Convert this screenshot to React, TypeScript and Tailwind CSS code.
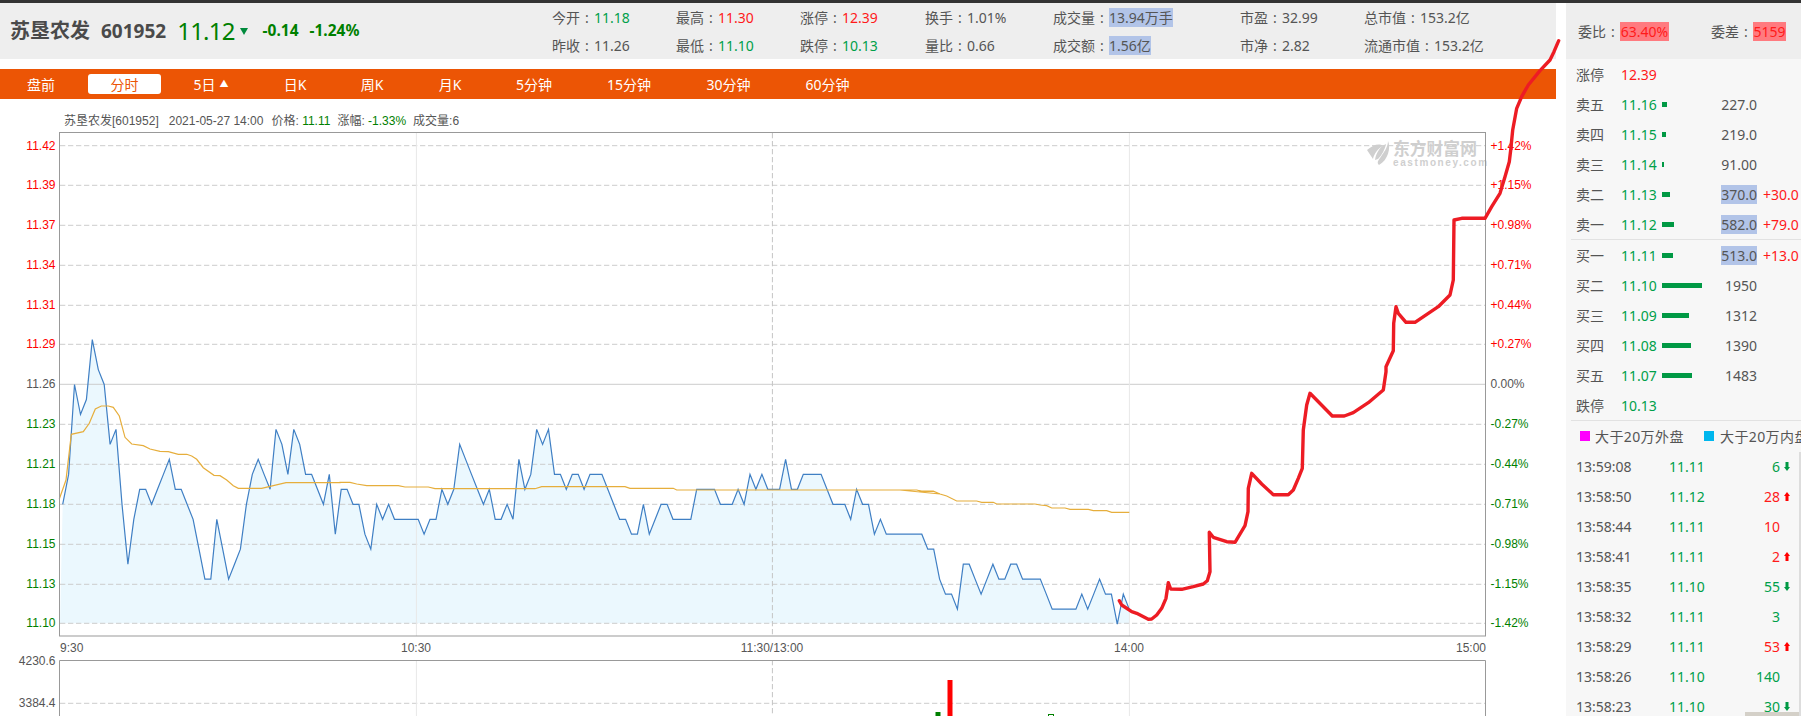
const GREEN = '#00a04a';
const RED = '#ff1a1a';

// price per minute, in cents above 11.00
const cents = [
  18, 20, 26, 24, 25, 29, 27, 26, 22, 23,
  18, 14, 17, 19, 19, 18, 19, 20, 21, 19,
  19, 18, 17, 15, 13, 13, 17, 15, 13, 14,
  15, 18, 20, 21, 20, 19, 23, 22, 20, 23,
  22, 20, 20, 19, 18, 20, 16, 19, 19, 18,
  18, 16, 15, 18, 17, 18, 17, 17, 17, 17,
  17, 16, 17, 17, 19, 18, 19, 22, 21, 20,
  19, 18, 19, 17, 17, 18, 17, 21, 19, 20,
  23, 22, 23, 20, 20, 19, 20, 20, 19, 20,
  20, 20, 19, 18, 17, 17, 16, 16, 18, 16,
  17, 18, 18, 17, 17, 17, 17, 19, 19, 19,
  19, 18, 18, 18, 19, 18, 20, 19, 20, 19,
  19, 19, 21, 19, 19, 20, 20, 20, 20, 19,
  18, 18, 18, 17, 19, 18, 18, 16, 17, 16,
  16, 16, 16, 16, 16, 16, 15, 15, 13, 12,
  12, 11, 14, 14, 13, 12, 13, 14, 13, 13,
  14, 14, 13, 13, 13, 13, 12, 11, 11, 11,
  11, 11, 12, 11, 12, 13, 12, 12, 10, 12, 11,
];
const pricePts = cents
  .map((c, i) => `${(62.7 + 5.925 * i).toFixed(1)},${(504.3 - (c - 18) * 14.97).toFixed(1)}`)
  .join(' ');
const areaPts = `60,623.3 ${pricePts} 1129.2,623.3`;

// traced in 3x crop coordinates, so convert back to page pixels
const traced = (bx: number, by: number, p: number[][]) =>
  p.map(([x, y]) => `${(bx + x / 3).toFixed(1)},${(by + y / 3).toFixed(1)}`).join(' ');

const avgPts = [
  traced(40, 320, [[58, 537], [78, 480], [94, 343], [130, 335], [148, 310], [166, 267], [184, 258], [205, 258], [220, 262], [238, 288], [255, 352], [275, 372], [310, 377], [330, 387], [360, 394], [385, 395], [415, 403], [440, 403], [455, 408], [470, 418], [490, 443], [522, 466], [540, 467], [560, 480], [580, 497], [595, 505], [665, 505], [700, 497], [738, 488], [900, 488]]),
  traced(340, 400, [[0, 247], [30, 247], [50, 252], [80, 257], [175, 257], [195, 261], [265, 261], [285, 266], [585, 266], [605, 260], [855, 260], [870, 265], [900, 265]]),
  traced(640, 430, [[0, 175], [100, 175], [110, 180], [830, 180], [845, 184], [880, 184], [900, 192]]),
  traced(900, 480, [[0, 30], [50, 30], [65, 33], [100, 33], [120, 42], [140, 48], [170, 63], [230, 63], [245, 67], [280, 67], [290, 72], [405, 72], [420, 75], [440, 77], [455, 84], [495, 84], [510, 88], [565, 88], [580, 92], [620, 92], [635, 97], [688, 97]]),
].join(' ');

const redPts = [
  traced(1100, 360, [[58, 722], [65, 735], [95, 755], [110, 760], [145, 778], [155, 777], [170, 765], [185, 745], [198, 715], [205, 668], [212, 687], [245, 688], [280, 680], [310, 672], [322, 662], [330, 635], [328, 517], [340, 532], [380, 545], [405, 547], [435, 497], [444, 455], [445, 385], [455, 340], [485, 372], [520, 404], [565, 404], [580, 390], [595, 355], [607, 325], [610, 210], [620, 135], [630, 100], [697, 168], [733, 168], [760, 158], [805, 128], [850, 90], [858, 35]]),
  traced(1100, 30, [[858, 1010], [880, 962], [881, 880], [888, 830], [895, 850], [918, 877], [945, 877], [1015, 830], [1050, 795], [1060, 750], [1062, 570], [1085, 565], [1155, 565], [1175, 530], [1200, 490], [1215, 440], [1228, 395], [1232, 360], [1238, 300], [1250, 235], [1265, 200], [1285, 165], [1320, 122], [1350, 90], [1362, 65], [1376, 32]]),
].join(' ');

const gridRows = [
  { y: 145.7, l: '11.42', r: '+1.42%', c: '#ff0000' },
  { y: 185.3, l: '11.39', r: '+1.15%', c: '#ff0000' },
  { y: 225.3, l: '11.37', r: '+0.98%', c: '#ff0000' },
  { y: 265.3, l: '11.34', r: '+0.71%', c: '#ff0000' },
  { y: 305.3, l: '11.31', r: '+0.44%', c: '#ff0000' },
  { y: 344.3, l: '11.29', r: '+0.27%', c: '#ff0000' },
  { y: 384.3, l: '11.26', r: '0.00%', c: '#555555' },
  { y: 424.3, l: '11.23', r: '-0.27%', c: '#008000' },
  { y: 464.3, l: '11.21', r: '-0.44%', c: '#008000' },
  { y: 504.3, l: '11.18', r: '-0.71%', c: '#008000' },
  { y: 544.3, l: '11.15', r: '-0.98%', c: '#008000' },
  { y: 584.3, l: '11.13', r: '-1.15%', c: '#008000' },
  { y: 623.3, l: '11.10', r: '-1.42%', c: '#008000' },
];

const statCols = [
  { w: 'w-[124px]', a: ['今开', '11.18', GREEN], b: ['昨收', '11.26', '#555'] },
  { w: 'w-[124px]', a: ['最高', '11.30', RED], b: ['最低', '11.10', GREEN] },
  { w: 'w-[125px]', a: ['涨停', '12.39', RED], b: ['跌停', '10.13', GREEN] },
  { w: 'w-[128px]', a: ['换手', '1.01%', '#555'], b: ['量比', '0.66', '#555'] },
  { w: 'w-[187px]', a: ['成交量', '13.94万手', '#555', 1], b: ['成交额', '1.56亿', '#555', 1] },
  { w: 'w-[124px]', a: ['市盈', '32.99', '#555'], b: ['市净', '2.82', '#555'] },
  { w: 'w-[190px]', a: ['总市值', '153.2亿', '#555'], b: ['流通市值', '153.2亿', '#555'] },
];

const tabs = [
  { t: '盘前', w: 'w-[82px]' },
  { t: '分时', w: 'w-[73px] ml-[6px]', on: true },
  { t: '5日', w: 'w-[100px]', up: true },
  { t: '日K', w: 'w-[68px]' },
  { t: '周K', w: 'w-[86px]' },
  { t: '月K', w: 'w-[70px]' },
  { t: '5分钟', w: 'w-[98px]' },
  { t: '15分钟', w: 'w-[92px]' },
  { t: '30分钟', w: 'w-[107px]' },
  { t: '60分钟', w: 'w-[91px]' },
];

const sells = [
  { n: '卖五', p: '11.16', bar: 'w-[5px]', v: '227.0' },
  { n: '卖四', p: '11.15', bar: 'w-[4px]', v: '219.0' },
  { n: '卖三', p: '11.14', bar: 'w-[2px]', v: '91.00' },
  { n: '卖二', p: '11.13', bar: 'w-[8px]', v: '370.0', d: '+30.0' },
  { n: '卖一', p: '11.12', bar: 'w-[12px]', v: '582.0', d: '+79.0' },
];
const buys = [
  { n: '买一', p: '11.11', bar: 'w-[11px]', v: '513.0', d: '+13.0' },
  { n: '买二', p: '11.10', bar: 'w-[40px]', v: '1950' },
  { n: '买三', p: '11.09', bar: 'w-[27px]', v: '1312' },
  { n: '买四', p: '11.08', bar: 'w-[29px]', v: '1390' },
  { n: '买五', p: '11.07', bar: 'w-[30px]', v: '1483' },
];

const trades = [
  { t: '13:59:08', p: '11.11', v: '6', c: GREEN, a: 'down' },
  { t: '13:58:50', p: '11.12', v: '28', c: RED, a: 'up' },
  { t: '13:58:44', p: '11.11', v: '10', c: RED },
  { t: '13:58:41', p: '11.11', v: '2', c: RED, a: 'up' },
  { t: '13:58:35', p: '11.10', v: '55', c: GREEN, a: 'down' },
  { t: '13:58:32', p: '11.11', v: '3', c: GREEN },
  { t: '13:58:29', p: '11.11', v: '53', c: RED, a: 'up' },
  { t: '13:58:26', p: '11.10', v: '140', c: GREEN },
  { t: '13:58:23', p: '11.10', v: '30', c: GREEN, a: 'down' },
];

function Colon() {
  return <span className="inline-block w-[14px] text-center">:</span>;
}

function Stat({ item }: { item: any[] }) {
  const [label, value, color, mark] = item;
  return (
    <div className="flex h-[28px] items-center whitespace-nowrap text-[14px] text-[#555]">
      <span>{label}</span>
      <Colon />
      <span
        className={mark ? 'flex h-[19px] items-center bg-[#b2c4e8]' : ''}
        style={{ color }}
      >
        {value}
      </span>
    </div>
  );
}

function Chart() {
  return (
    <svg
      width="1556"
      height="584"
      viewBox="0 132 1556 584"
      className="block text-[12px] [font-family:'Liberation_Sans','Noto_Sans_CJK_SC',sans-serif]"
    >
      <polygon points={areaPts} fill="#ebf8fe" />

      {gridRows.map((g) =>
        g.y === 384.3 ? (
          <line key={g.y} x1="60" x2="1485" y1={g.y} y2={g.y} stroke="#cccccc" strokeWidth="1" />
        ) : (
          <line key={g.y} x1="60" x2="1485" y1={g.y} y2={g.y} stroke="#cccccc" strokeWidth="1" strokeDasharray="5.3 2.7" />
        )
      )}
      <line x1="60" x2="1485" y1="703.3" y2="703.3" stroke="#cccccc" strokeDasharray="5.3 2.7" />

      {/* vertical time lines, carried on through the volume panel */}
      <line x1="416.4" x2="416.4" y1="133" y2="636" stroke="#e8e8e8" />
      <line x1="416.4" x2="416.4" y1="660" y2="716" stroke="#e8e8e8" />
      <line x1="772.4" x2="772.4" y1="133" y2="636" stroke="#c4c4c4" strokeDasharray="5.3 2.7" />
      <line x1="772.4" x2="772.4" y1="660" y2="716" stroke="#c4c4c4" strokeDasharray="5.3 2.7" />
      <line x1="1129.4" x2="1129.4" y1="133" y2="636" stroke="#e8e8e8" />
      <line x1="1129.4" x2="1129.4" y1="660" y2="716" stroke="#e8e8e8" />

      {/* eastmoney watermark */}
      <g fill="#cfcfcf">
        <path d="M1367 150 C1373 145 1379 143 1383 146 C1378 148 1374 154 1373 159 C1371 156 1369 153 1367 150 Z" />
        <path d="M1375 160 C1376 152 1381 146 1386 144 C1385 149 1382 155 1378 159 Z" />
        <path d="M1379 165 C1376 162 1379 160 1382 155 C1385 151 1388 146 1388 141 C1391 148 1388 160 1379 165 Z" />
        <text x="1393" y="155" fontSize="16.8" fontWeight="700" className="[font-family:'Noto_Sans_CJK_SC',sans-serif]">
          东方财富网
        </text>
        <text x="1393" y="166" fontSize="10" fontWeight="700" letterSpacing="1.6">
          eastmoney.com
        </text>
      </g>

      <polyline points={pricePts} fill="none" stroke="#3f7fc4" strokeWidth="1.2" />
      <polyline points={avgPts} fill="none" stroke="#e6ae3c" strokeWidth="1.2" />

      <rect x="59.5" y="132.5" width="1426" height="503.5" fill="none" stroke="#999999" />
      <path d="M59.5 716 V660.5 H1485.5 V716" fill="none" stroke="#999999" />

      {gridRows.map((g) => (
        <g key={g.l} fill={g.c}>
          <text x="55.5" y={g.y + 4} textAnchor="end">{g.l}</text>
          <text x="1490.5" y={g.y + 4}>{g.r}</text>
        </g>
      ))}

      <g fill="#555555">
        <text x="60" y="652">9:30</text>
        <text x="416" y="652" textAnchor="middle">10:30</text>
        <text x="772" y="652" textAnchor="middle">11:30/13:00</text>
        <text x="1129" y="652" textAnchor="middle">14:00</text>
        <text x="1486" y="652" textAnchor="end">15:00</text>
        <text x="55.5" y="665" textAnchor="end">4230.6</text>
        <text x="55.5" y="707" textAnchor="end">3384.4</text>
      </g>

      <rect x="947.5" y="680" width="5" height="36" fill="#ff0000" />
      <rect x="935.5" y="712" width="5" height="4" fill="#008000" />
      <rect x="1048.5" y="714.5" width="5" height="2" fill="#ffffff" stroke="#008000" />
    </svg>
  );
}

function QuoteRow({ r }: { r: { n: string; p: string; bar: string; v: string; d?: string } }) {
  return (
    <div className="flex h-[30px] items-center pl-[10px] whitespace-nowrap">
      <span className="w-[45px] shrink-0 text-[#555]">{r.n}</span>
      <span className="w-[41px] shrink-0 text-[#00a04a]">{r.p}</span>
      <div className="flex w-[95px] shrink-0 items-center justify-between">
        <span className={`h-[5px] bg-[#009944] ${r.bar}`} />
        <span className={r.d ? 'flex h-[19px] items-center bg-[#b2c4e8] text-[#555]' : 'text-[#555]'}>{r.v}</span>
      </div>
      {r.d && <span className="ml-[6px] text-[#ff1a1a]">{r.d}</span>}
    </div>
  );
}

function Arrow({ dir, color }: { dir: string; color: string }) {
  return (
    <svg width="6" height="9" viewBox="0 0 6 9" className="ml-[4px] shrink-0">
      <path
        d={dir === 'up' ? 'M3 0 L6 4 H4.5 V9 H1.5 V4 H0 Z' : 'M3 9 L6 5 H4.5 V0 H1.5 V5 H0 Z'}
        fill={color === RED ? '#ff0000' : '#009944'}
      />
    </svg>
  );
}

function SidePanel() {
  return (
    <div className="relative h-[713px] w-[235px] shrink-0 overflow-hidden bg-[#f7f7f7] text-[14px]">
      <div className="flex h-[56px] items-center bg-[#eeeeee] pl-[12px] whitespace-nowrap text-[#555]">
        <span>委比</span>
        <Colon />
        <span className="flex h-[19px] w-[49px] items-center justify-center bg-[#ff7a7f] text-[#ff1a1a]">63.40%</span>
        <span className="ml-[42px]">委差</span>
        <Colon />
        <span className="flex h-[19px] w-[33px] items-center justify-center bg-[#ff7a7f] text-[#ff1a1a]">5159</span>
      </div>

      <div className="flex h-[30px] items-center pl-[10px]">
        <span className="w-[45px] text-[#555]">涨停</span>
        <span className="text-[#ff1a1a]">12.39</span>
      </div>
      {sells.map((r) => <QuoteRow key={r.n} r={r} />)}
      <div className="ml-[5px] h-px bg-[#e2e2e2]" />
      {buys.map((r) => <QuoteRow key={r.n} r={r} />)}
      <div className="flex h-[30px] items-center pl-[10px]">
        <span className="w-[45px] text-[#555]">跌停</span>
        <span className="text-[#00a04a]">10.13</span>
      </div>
      <div className="ml-[5px] h-px bg-[#e2e2e2]" />

      <div className="flex h-[30px] items-center pl-[14px] whitespace-nowrap text-[#555]">
        <span className="h-[10px] w-[10px] shrink-0 bg-[#ff00ff]" />
        <span className="ml-[5px] w-[109px] shrink-0 tracking-[0.4px]">大于20万外盘</span>
        <span className="h-[10px] w-[10px] shrink-0 bg-[#00b7ee]" />
        <span className="ml-[6px] shrink-0 tracking-[0.4px]">大于20万内盘</span>
      </div>

      {trades.map((r) => (
        <div key={r.t} className="flex h-[30px] items-center pl-[10px] whitespace-nowrap">
          <span className="w-[93px] text-[#555]">{r.t}</span>
          <span className="w-[60px] text-[#00a04a]">{r.p}</span>
          <span className="w-[51px] text-right" style={{ color: r.c }}>{r.v}</span>
          {r.a && <Arrow dir={r.a} color={r.c} />}
        </div>
      ))}

      {/* bit of another window peeking in at the bottom right */}
      <div className="absolute right-0 bottom-0 h-[4px] w-[56px] bg-[#d4d0c8]" />
      <div className="absolute top-[449px] right-0 bottom-0 w-[2px] bg-[#dddddd]" />
    </div>
  );
}

export default function App() {
  return (
    <div className="relative h-[716px] w-[1801px] overflow-hidden bg-white [font-family:'Noto_Sans','Noto_Sans_CJK_SC',sans-serif]">
      <div className="h-[3px] bg-[#333333]" />
      <div className="flex">
        <div className="w-[1556px] shrink-0">
          <div className="flex h-[56px] bg-[#eeeeee]">
            <div className="flex w-[552px] items-center pl-[10px] whitespace-nowrap">
              <span className="text-[20px] font-bold text-[#4a4a4a]">苏垦农发</span>
              <span className="ml-[11px] text-[19px] font-bold text-[#4a4a4a]">601952</span>
              <span className="ml-[11px] text-[24px] tracking-[-0.8px] text-[#008000]">11.12</span>
              <svg width="8" height="7" viewBox="0 0 8 7" className="ml-[5px]">
                <polygon points="0,0 8,0 4,7" fill="#008a3c" />
              </svg>
              <span className="ml-[15px] text-[15.5px] font-bold text-[#008000]">-0.14</span>
              <span className="ml-[11px] text-[15.5px] font-bold text-[#008000]">-1.24%</span>
            </div>
            {statCols.map((c) => (
              <div key={c.a[0] as string} className={c.w}>
                <Stat item={c.a} />
                <Stat item={c.b} />
              </div>
            ))}
          </div>

          <div className="mt-[10px] flex h-[30px] items-center bg-[#ec5505] text-[14px] text-white">
            {tabs.map((t) => (
              <div
                key={t.t}
                className={`flex h-[20px] items-center justify-center whitespace-nowrap ${t.w} ${t.on ? 'rounded-[3px] bg-white text-[#ec5505]' : ''}`}
              >
                {t.t}
                {t.up && <span className="ml-[4px] text-[9px]">▲</span>}
              </div>
            ))}
          </div>

          <div className="flex h-[33px] items-center pt-[11px] pl-[64px] text-[12px] whitespace-nowrap text-[#555] [font-family:'Liberation_Sans','Noto_Sans_CJK_SC',sans-serif]">
            <span>苏垦农发[601952]</span>
            <span className="ml-[10px]">2021-05-27 14:00</span>
            <span className="ml-[8px]">价格: <span className="text-[#008000]">11.11</span></span>
            <span className="ml-[7px]">涨幅: <span className="text-[#008000]">-1.33%</span></span>
            <span className="ml-[7px]">成交量:6</span>
          </div>

          <Chart />
        </div>

        <div className="w-[10px] shrink-0" />
        <SidePanel />
      </div>

      {/* hand drawn red line sits on top of everything */}
      <svg width="1801" height="716" className="pointer-events-none absolute top-0 left-0">
        <polyline points={redPts} fill="none" stroke="#ed1c24" strokeWidth="3.4" strokeLinejoin="round" strokeLinecap="round" />
      </svg>
    </div>
  );
}
